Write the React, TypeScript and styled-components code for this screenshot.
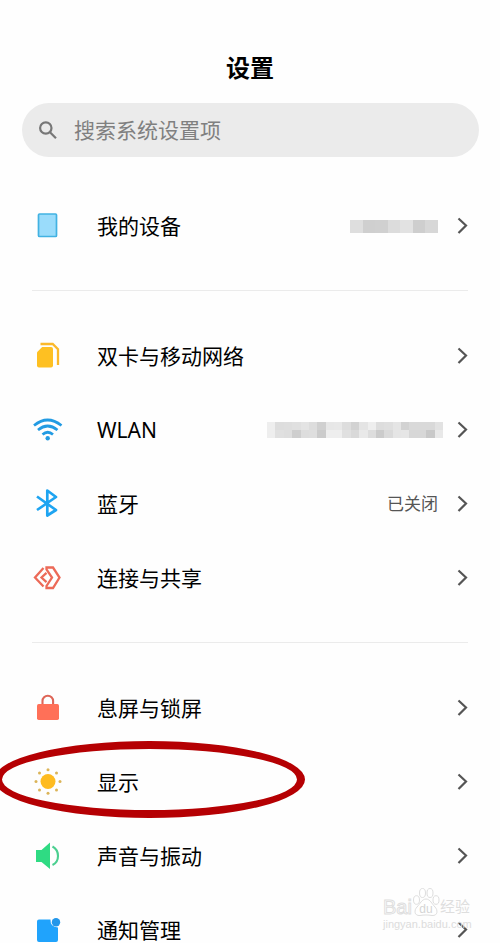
import React from "react";
import styled, { createGlobalStyle } from "styled-components";

const GlobalStyle = createGlobalStyle`
  *, *::before, *::after { box-sizing: border-box; }
  body {
    margin: 0;
    background: #fefefe;
    color: #000;
    font-family: "Noto Sans", "Noto Sans CJK SC", sans-serif;
  }
  button, input { font: inherit; color: inherit; }
`;

const Screen = styled.div`
  position: relative;
  height: 100vh;
  overflow: hidden;
`;

const Page = styled.main`
  height: 100%;
  overflow-x: hidden;
  overflow-y: auto;
  scrollbar-width: none;
`;

const Title = styled.h1`
  margin: 0;
  padding-top: 50px;
  font-size: 24px;
  line-height: 36px;
  font-weight: 700;
  text-align: center;
`;

const SearchBar = styled.label`
  display: flex;
  align-items: center;
  gap: 16px;
  height: 54px;
  margin: 17px 21px 32px 22px;
  padding: 0 16px;
  border-radius: 27px;
  background: #ebebeb;
  color: #777;
`;

const SearchInput = styled.input`
  flex: 1;
  min-width: 0;
  padding: 0;
  border: 0;
  outline: 0;
  background: transparent;
  font-size: 21px;
  line-height: 32px;
  &::placeholder { color: #808080; opacity: 1; }
`;

const Group = styled.section`
  margin: 0 32px;
  & + & {
    margin-top: 27px;
    padding-top: 28px;
    border-top: 1px solid #ebebeb;
  }
`;

const Row = styled.button`
  position: relative;
  display: flex;
  align-items: center;
  width: 100%;
  height: 74px;
  padding: 0;
  border: 0;
  background: transparent;
  text-align: left;
  cursor: pointer;
`;

const Icon = styled.svg`
  flex: none;
  width: 32px;
  height: 32px;
  margin-right: 33px;
`;

const SearchIcon = styled.svg`
  flex: none;
  width: 20px;
  height: 20px;
`;

const Label = styled.span`
  flex: 1;
  font-size: 21px;
  line-height: 24px;
`;

const Value = styled.span`
  margin-right: 19px;
  font-size: 17px;
  line-height: 24px;
  color: #555;
`;

const Chevron = styled.svg`
  flex: none;
  width: 11px;
  height: 18px;
`;

const Mosaic = styled.span<{ $columns: number; $width: number; $height: number; $gap: number }>`
  display: grid;
  grid-template-columns: repeat(${(p) => p.$columns}, 1fr);
  width: ${(p) => p.$width}px;
  height: ${(p) => p.$height}px;
  margin-right: ${(p) => p.$gap}px;
`;

const Tile = styled.span<{ $shade: string }>`
  background: ${(p) => p.$shade};
`;

const Ring = styled.span`
  position: absolute;
  left: -38px;
  top: -4px;
  width: 311px;
  height: 77px;
  border: 8px solid #b50003;
  border-radius: 50%;
  pointer-events: none;
`;

const Watermark = styled.div`
  position: absolute;
  right: 28px;
  bottom: 12px;
  display: flex;
  flex-direction: column;
  width: 89px;
  pointer-events: none;
  white-space: nowrap;
  font-family: "Liberation Sans", "Noto Sans CJK SC", sans-serif;
`;

const Brand = styled.div`
  display: flex;
  align-items: flex-end;
  height: 30px;
  color: #dedede;
  font-size: 20px;
  line-height: 20px;
`;

const BrandName = styled.span`
  color: #fff;
  -webkit-text-stroke: 1px #dedede;
`;

const BrandSuffix = styled.span`
  font-size: 15px;
`;

const Paw = styled.svg`
  flex: none;
  width: 28px;
  height: 30px;
`;

const Site = styled.div`
  font-size: 11px;
  line-height: 14px;
  color: #dcdcdc;
`;

const icons = {
  device: <rect x="6.5" y="4" width="18" height="22.5" rx="1" fill="#9adcfb" stroke="#42b2e2" strokeWidth="1.7" />,
  sim: (
    <>
      <path d="M5 12.2 10.2 7H19q2 0 2 2v16.500q0 2-2 2H7q-2 0-2-2z" fill="#fec022" />
      <path d="M8.500 4h12.200L26 9.300v15.700" fill="none" stroke="#fbb92b" strokeWidth="2.300" />
    </>
  ),
  wifi: (
    <>
      <g fill="none" stroke="#229be3" strokeWidth="2.700">
        <path d="M2 11.500Q15.500.5 29.500 11.500" />
        <path d="M6 16Q15.500 8 25.500 16" />
        <path d="M10.500 20.500Q15.700 16 21 20.500" />
      </g>
      <circle cx="15.700" cy="24.200" r="2.200" fill="#229be3" />
    </>
  ),
  bluetooth: (
    <path d="m5 8.500 19 13.500-8.700 5.500V2.500L24 9 5 22" fill="none" stroke="#1ea4f1" strokeWidth="2.700" strokeLinejoin="round" />
  ),
  share: (
    <g fill="none" stroke="#ec6a58" strokeWidth="2.300">
      <path d="m11.500 6-8.500 9.500 8.500 9" />
      <path d="M14.500 5.500h6.500l6.500 10L21 26h-6.500v-2l5.500-8.500-5.500-8z" />
      <path d="m14.500 10.800-5 4.700 5 4.700" />
    </g>
  ),
  lock: (
    <>
      <path d="M10.500 14V9a5.300 5.300 0 0 1 10.600 0v5" fill="none" stroke="#de6557" strokeWidth="2.100" />
      <rect x="5" y="12" width="22" height="16" rx="1.700" fill="#ff7058" />
    </>
  ),
  sun: (
    <>
      <circle cx="16" cy="15.500" r="7.500" fill="#febb20" />
      <g fill="#dbb458">
        <circle cx="16" cy="3.700" r="1.500" />
        <circle cx="24.500" cy="7" r="1.500" />
        <circle cx="28" cy="15.500" r="1.500" />
        <circle cx="24.500" cy="24" r="1.500" />
        <circle cx="16" cy="27.300" r="1.500" />
        <circle cx="7.500" cy="24" r="1.500" />
        <circle cx="4" cy="15.500" r="1.500" />
        <circle cx="7.500" cy="7" r="1.500" />
      </g>
    </>
  ),
  sound: (
    <>
      <path d="M4 10h5.500l8.500-7.500v26.500L9.500 22H4z" fill="#2fdb83" />
      <path d="M20.500 6.500q5.500 3 5.500 9.500t-5.500 9" fill="none" stroke="#4bcf90" strokeWidth="2.100" />
    </>
  ),
  notice: (
    <>
      <path d="M7 5.500h11.500q-.5 7.500 7.500 8V26q0 2-2 2H7q-2 0-2-2V7.500q0-2 2-2z" fill="#20a3fc" />
      <circle cx="24" cy="8.300" r="4.200" fill="#2397ea" />
    </>
  ),
};

const deviceTiles = ["#dedede", "#cfcfcf", "#d0d0d0", "#dcdcdc", "#e2e2e2", "#cecece", "#d7d7d7"];

const wlanTiles = [
  "#eeeeee", "#dddddd", "#dedede", "#e0e0e0", "#e4e4e4", "#dddddd", "#d0d0d0",
  "#e7e7e7", "#e8e8e8", "#dddddd", "#d2d2d2", "#e4e4e4", "#eeeeee", "#dddddd",
  "#dfdfdf", "#e5e5e5", "#d2d2d2", "#d9d9d9", "#d9d9d9", "#d9d9d9", "#e2e2e2",
  "#eeeeee", "#e0e0e0", "#dedede", "#cecece", "#dddddd", "#dedede", "#cbcbcb",
  "#eeeeee", "#eeeeee", "#e0e0e0", "#d9d9d9", "#e9e9e9", "#dddddd", "#cbcbcb",
  "#dadada", "#e5e5e5", "#e6e6e6", "#d7d7d7", "#d7d7d7", "#c8c8c8", "#e8e8e8",
];

interface Setting {
  icon: keyof typeof icons;
  label: string;
  value?: React.ReactNode;
  circled?: boolean;
}

const groups: Setting[][] = [
  [
    {
      icon: "device",
      label: "我的设备",
      value: (
        <Mosaic $columns={7} $width={88} $height={13} $gap={19}>
          {deviceTiles.map((shade, i) => <Tile key={i} $shade={shade} />)}
        </Mosaic>
      ),
    },
  ],
  [
    { icon: "sim", label: "双卡与移动网络" },
    {
      icon: "wifi",
      label: "WLAN",
      value: (
        <Mosaic $columns={21} $width={176} $height={16} $gap={14}>
          {wlanTiles.map((shade, i) => <Tile key={i} $shade={shade} />)}
        </Mosaic>
      ),
    },
    { icon: "bluetooth", label: "蓝牙", value: <Value>已关闭</Value> },
    { icon: "share", label: "连接与共享" },
  ],
  [
    { icon: "lock", label: "息屏与锁屏" },
    { icon: "sun", label: "显示", circled: true },
    { icon: "sound", label: "声音与振动" },
    { icon: "notice", label: "通知管理" },
  ],
];

function SettingRow({ icon, label, value, circled }: Setting) {
  return (
    <Row type="button">
      <Icon viewBox="0 0 32 32" aria-hidden="true">{icons[icon]}</Icon>
      <Label>{label}</Label>
      {value}
      <Chevron viewBox="0 0 11 18" aria-hidden="true">
        <path d="m1.500 1.500 7.500 7-7.500 7.500" fill="none" stroke="#555" strokeWidth="2.200" />
      </Chevron>
      {circled && <Ring />}
    </Row>
  );
}

export default function App() {
  return (
    <Screen>
      <GlobalStyle />
      <Page>
        <Title>设置</Title>
        <SearchBar>
          <SearchIcon viewBox="0 0 20 20" aria-hidden="true">
            <g fill="none" stroke="#777" strokeWidth="2.200">
              <circle cx="7.800" cy="8" r="5.700" />
              <path d="m12 12.300 6 6" />
            </g>
          </SearchIcon>
          <SearchInput type="text" placeholder="搜索系统设置项" aria-label="搜索系统设置项" />
        </SearchBar>
        {groups.map((group, i) => (
          <Group key={i}>
            {group.map((item) => <SettingRow key={item.label} {...item} />)}
          </Group>
        ))}
      </Page>
      <Watermark>
        <Brand>
          <BrandName>Bai</BrandName>
          <Paw viewBox="0 0 28 30" aria-hidden="true">
            <g fill="#fff" stroke="#dedede">
              <ellipse cx="4.500" cy="13" rx="3" ry="4.300" />
              <ellipse cx="10.500" cy="6" rx="3" ry="4.500" />
              <ellipse cx="18" cy="6" rx="3" ry="4.500" />
              <ellipse cx="24" cy="13" rx="3" ry="4.300" />
              <path d="M14 12c4 0 6 5 9 8s3 9-3 8.500c-4-.7-8-.7-12 0-6 .5-6-5.500-3-8.500s5-8 9-8z" />
            </g>
            <text x="14" y="26" textAnchor="middle" fontSize="12" fill="#d5d5d5">du</text>
          </Paw>
          <BrandSuffix>经验</BrandSuffix>
        </Brand>
        <Site>jingyan.baidu.com</Site>
      </Watermark>
    </Screen>
  );
}
